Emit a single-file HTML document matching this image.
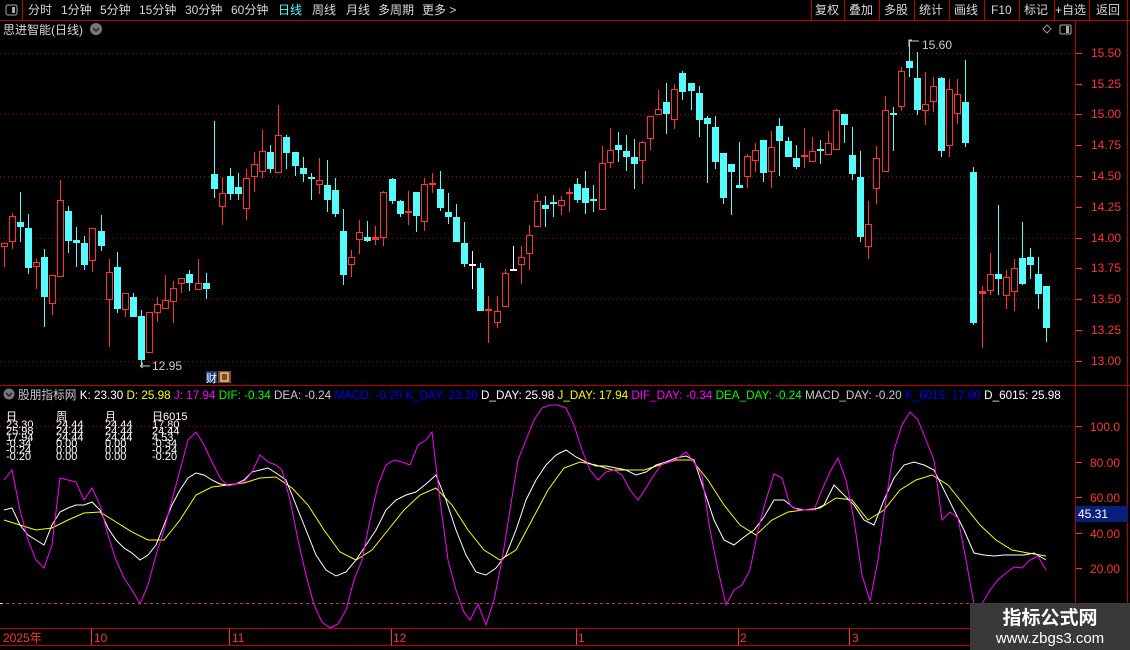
<!DOCTYPE html>
<html><head><meta charset="utf-8"><style>
html,body{margin:0;padding:0;background:#000;width:1130px;height:650px;overflow:hidden}
svg{display:block}
text{font-family:"Liberation Sans","Noto Sans CJK SC",sans-serif}
</style></head><body>
<svg id="s" width="1130" height="650" xmlns="http://www.w3.org/2000/svg" font-size="12">
<rect width="1130" height="650" fill="#000"/>
<line x1="0" y1="20.5" x2="1130" y2="20.5" stroke="#c00000"/>
<line x1="22.5" y1="0" x2="22.5" y2="20" stroke="#c00000"/>
<rect x="6" y="5" width="11" height="10" rx="2" fill="none" stroke="#aaa"/><rect x="12" y="7" width="3" height="6" fill="#aaa"/>
<g fill="#d8d8d8" font-size="12">
<text x="28" y="14">分时</text><text x="61" y="14">1分钟</text><text x="100" y="14">5分钟</text><text x="139" y="14">15分钟</text><text x="185" y="14">30分钟</text><text x="231" y="14">60分钟</text>
<text x="278" y="14" fill="#54fcfc">日线</text><text x="312" y="14">周线</text><text x="346" y="14">月线</text><text x="378" y="14">多周期</text><text x="422" y="14">更多 &gt;</text>
<text x="815" y="14">复权</text><text x="849" y="14">叠加</text><text x="884" y="14">多股</text><text x="919" y="14">统计</text><text x="954" y="14">画线</text><text x="991" y="14">F10</text><text x="1024" y="14">标记</text><text x="1055" y="14">+自选</text><text x="1096" y="14">返回</text>
</g>
<g stroke="#c00000"><line x1="811.5" y1="0" x2="811.5" y2="20"/><line x1="844.5" y1="0" x2="844.5" y2="20"/><line x1="879.5" y1="0" x2="879.5" y2="20"/><line x1="914.5" y1="0" x2="914.5" y2="20"/><line x1="949.5" y1="0" x2="949.5" y2="20"/><line x1="984.5" y1="0" x2="984.5" y2="20"/><line x1="1019.5" y1="0" x2="1019.5" y2="20"/><line x1="1054.5" y1="0" x2="1054.5" y2="20"/><line x1="1089.5" y1="0" x2="1089.5" y2="20"/><line x1="1127.5" y1="0" x2="1127.5" y2="650"/></g>
<text x="3" y="34" fill="#d8d8d8" font-size="12">思进智能(日线)</text>
<circle cx="96" cy="29" r="6" fill="#777"/><path d="M93 28l3 3 3-3" stroke="#222" stroke-width="1.5" fill="none"/>
<path d="M1047 25l4 4-4 4-4-4z" fill="none" stroke="#999"/>
<rect x="1060" y="25" width="11" height="9" rx="1.5" fill="none" stroke="#aaa"/><rect x="1066" y="26" width="3" height="7" fill="#aaa"/>
<line x1="1075.5" y1="20" x2="1075.5" y2="650" stroke="#c00000"/>
<line x1="0" y1="385.5" x2="1130" y2="385.5" stroke="#c00000"/>
<line x1="0" y1="628.5" x2="1130" y2="628.5" stroke="#c00000"/>
<line x1="0" y1="645.5" x2="1130" y2="645.5" stroke="#c00000"/>
<g id="grid" stroke="#a00000" stroke-dasharray="1,3"></g>
<g id="ax" fill="#ff3232" font-size="12"></g>
<g id="cd"></g>
<g fill="#ccc" font-size="12"><text x="152" y="370">12.95</text><text x="922" y="49">15.60</text></g>
<path d="M142 362v4h8M140 366l3-2M140 366l3 2" stroke="#ccc" fill="none"/>
<path d="M909 47v-7h3M909 41h10" stroke="#ccc" fill="none"/>
<rect x="206" y="371" width="11" height="12" fill="#1a3a7a"/><rect x="218" y="371" width="13" height="12" fill="#8a4a10"/>
<text x="206" y="382" fill="#fff" font-size="11">财</text><rect x="221" y="373" width="7" height="8" fill="none" stroke="#fff"/>
<circle cx="9" cy="394" r="5.5" fill="#777"/><path d="M6 393l3 3 3-3" stroke="#222" stroke-width="1.5" fill="none"/>
<svg x="0" y="385" width="1075" height="20"><text x="18" y="14" font-size="11.7" fill="#ccc">股朋指标网 <tspan fill="#fff">K: 23.30</tspan> <tspan fill="#ffff00">D: 25.98</tspan> <tspan fill="#ff00ff">J: 17.94</tspan> <tspan fill="#00ff00">DIF: -0.34</tspan> <tspan fill="#ccc">DEA: -0.24</tspan> <tspan fill="#0000ff">MACD: -0.20 K_DAY: 23.30</tspan> <tspan fill="#fff">D_DAY: 25.98</tspan> <tspan fill="#ffff00">J_DAY: 17.94</tspan> <tspan fill="#ff00ff">DIF_DAY: -0.34</tspan> <tspan fill="#00ff00">DEA_DAY: -0.24</tspan> <tspan fill="#ccc">MACD_DAY: -0.20</tspan> <tspan fill="#0000ff">K_6015: 17.80</tspan> <tspan fill="#fff">D_6015: 25.98</tspan></text></svg>
<g fill="#fff" font-size="11">
<text x="6" y="420">日</text><text x="56" y="420">周</text><text x="105" y="420">月</text><text x="152" y="420">日6015</text>
<g id="tbl"></g>
</g>
<line x1="0" y1="426.5" x2="1075" y2="426.5" stroke="#a00000" stroke-dasharray="1,3"/>
<g id="ind"></g>
<line x1="0" y1="603.5" x2="1075" y2="603.5" stroke="#ddd" stroke-dasharray="3,3"/>
<line x1="3" y1="603.5" x2="1075" y2="603.5" stroke="#c04040" stroke-dasharray="3,3" stroke-dashoffset="3"/>
<g fill="#ff3232" font-size="12"><text x="1090" y="431">100.0</text><text x="1090" y="467">80.00</text><text x="1090" y="502">60.00</text><text x="1090" y="538">40.00</text><text x="1090" y="573">20.00</text></g>
<g stroke="#ff3232"><line x1="1076" y1="426.5" x2="1082" y2="426.5"/><line x1="1076" y1="462.5" x2="1082" y2="462.5"/><line x1="1076" y1="497.5" x2="1082" y2="497.5"/><line x1="1076" y1="533.5" x2="1082" y2="533.5"/><line x1="1076" y1="568.5" x2="1082" y2="568.5"/></g>
<rect x="1076" y="506" width="52" height="16" fill="#0a1f7a"/><text x="1078" y="518" fill="#fff" font-size="12">45.31</text>
<g fill="#ff3232" font-size="12"><text x="3" y="642">2025年</text><text x="94" y="642">10</text><text x="232" y="642">11</text><text x="393" y="642">12</text><text x="578" y="642">1</text><text x="740" y="642">2</text><text x="852" y="642">3</text></g>
<g stroke="#ff3232"><line x1="91.5" y1="629" x2="91.5" y2="645"/><line x1="229.5" y1="629" x2="229.5" y2="645"/><line x1="391.5" y1="629" x2="391.5" y2="645"/><line x1="576.5" y1="629" x2="576.5" y2="645"/><line x1="738.5" y1="629" x2="738.5" y2="645"/><line x1="849.5" y1="629" x2="849.5" y2="645"/></g>
<rect x="970" y="603" width="160" height="47" fill="#3a3838"/>
<text x="1050" y="624" fill="#fff" font-size="19" font-weight="bold" text-anchor="middle">指标公式网</text>
<text x="1050" y="643" fill="#fff" font-size="15" text-anchor="middle">www.zbgs3.com</text>
</svg>
<script>
var NS="http://www.w3.org/2000/svg";
function el(p,t,a){var e=document.createElementNS(NS,t);for(var k in a)e.setAttribute(k,a[k]);p.appendChild(e);return e;}
var g=document.getElementById('grid');
[52.7,114.3,175.9,237.5,299.1,360.7].forEach(function(y){el(g,'line',{x1:0,x2:1075,y1:Math.round(y)+.5,y2:Math.round(y)+.5});});
var ax=document.getElementById('ax');
var labs=["15.50","15.25","15.00","14.75","14.50","14.25","14.00","13.75","13.50","13.25","13.00"];
labs.forEach(function(l,i){var y=52.7+i*30.8;var t=el(ax,'text',{x:1091,y:Math.round(y+4)});t.textContent=l;el(ax,'line',{x1:1076,x2:1082,y1:Math.round(y)+.5,y2:Math.round(y)+.5,stroke:'#ff3232'});});
var D="r4,243,247,243,267 r12,216,242,213,249 c20,222,227,192,242 c28,228,268,214,274 r36,262,267,259,289 c44,257,297,249,327 r52,275,304,275,315 r60,200,277,180,277 c68,211,241,206,253 c76,240,243,227,267 c84,243,265,236,270 r92,228,261,228,272 c101,231,246,215,251 r109,272,300,259,347 c117,267,309,252,313 r125,293,310,293,317 c133,297,317,293,317 c141,316,360,310,365 r149,312,353,312,353 r157,304,313,297,322 r165,300,309,275,309 r173,288,302,281,323 r181,278,284,278,293 c189,274,283,270,291 r198,283,290,259,290 c206,283,289,273,299 c214,174,189,121,198 r222,193,207,177,225 c230,176,194,168,200 c238,187,194,173,200 r246,178,209,169,220 r254,164,177,152,192 r262,151,172,130,178 c270,152,169,145,173 r278,135,173,105,173 c286,137,153,135,169 c295,152,166,152,176 c303,168,174,157,182 c311,177,179,173,200 r319,180,185,158,194 c327,185,200,160,212 c335,190,214,178,217 c343,231,275,209,285 r351,257,265,250,277 r359,232,240,220,254 c367,237,241,221,242 r375,237,240,226,245 r383,192,238,191,246 c392,179,201,178,204 c400,201,214,200,217 r408,211,213,191,225 c416,192,216,192,232 r424,184,222,178,231 r432,183,185,173,193 c440,189,208,171,211 c448,212,217,193,224 c456,217,242,204,242 c464,243,264,222,267 w472,264,266,251,289 c480,268,311,263,311 r488,309,311,296,343 r497,311,323,296,328 r505,273,307,269,307 w513,269,271,246,271 r521,257,265,246,284 r529,235,254,225,270 r537,201,227,194,227 c545,205,209,196,227 c553,202,204,195,217 r561,200,206,196,215 r569,192,194,188,212 c577,184,200,178,203 c585,188,203,171,214 c593,199,201,185,212 r602,163,210,146,210 r610,150,163,128,168 c618,145,150,132,162 c626,151,157,135,171 c634,157,164,139,189 r642,142,161,141,184 r650,116,139,116,150 r658,109,115,90,115 c666,102,114,83,134 r674,89,120,84,129 c682,73,92,71,100 c691,83,91,83,110 c699,93,120,86,137 c707,118,124,116,183 c715,127,162,116,169 c723,153,198,153,204 c731,164,172,164,215 c739,185,188,142,188 r747,156,177,154,188 r755,150,161,143,172 c763,140,173,140,182 r771,147,172,131,188 c779,126,141,118,176 c788,141,157,137,157 c796,158,167,145,169 r804,155,157,128,168 r812,151,162,137,162 c820,149,151,140,164 r828,143,155,131,155 r836,110,150,109,150 c844,114,125,114,143 c852,155,174,127,180 c860,177,237,151,242 r868,224,247,201,259 r876,158,189,146,204 r885,110,172,96,172 c893,113,115,107,151 r901,71,107,67,111 c909,61,68,40,77 c917,78,110,52,115 r925,104,111,72,125 r933,86,102,77,112 c941,78,151,77,157 r949,89,146,79,157 r957,94,114,79,124 c965,102,143,60,147 c973,172,323,167,325 r982,291,294,286,348 r990,274,291,253,295 c998,274,279,205,295 r1006,277,296,270,309 r1014,268,292,259,311 c1022,258,284,222,285 c1030,257,265,248,279 c1038,274,294,257,309 c1046,286,328,286,342";
var cd=document.getElementById('cd');
D.split(' ').forEach(function(s){var t=s[0];var v=s.slice(1).split(',').map(Number);var x=v[0],bt=v[1],bb=v[2],wt=v[3],wb=v[4];
var col=t=='r'?'#ff3232':(t=='c'?'#54fcfc':'#ffffff');
el(cd,'line',{x1:x+.5,x2:x+.5,y1:wt,y2:wb,stroke:col});
if(bb-bt<=3){el(cd,'rect',{x:x-3,y:bt,width:7,height:Math.max(2,bb-bt),fill:col});}
else if(t=='r'){el(cd,'rect',{x:x-2.5,y:bt+.5,width:6,height:bb-bt-1,fill:'#000',stroke:col});}
else el(cd,'rect',{x:x-3,y:bt,width:7,height:bb-bt,fill:col});});
var tb=document.getElementById('tbl');
var rows=[["23.30","24.44","24.44","17.80"],["25.98","24.44","24.44","24.44"],["17.94","24.44","24.44","4.53"],["-0.34","0.00","0.00","-0.34"],["-0.24","0.00","0.00","-0.24"],["-0.20","0.00","0.00","-0.20"]];
var xs=[6,56,105,152];
rows.forEach(function(r,i){r.forEach(function(c,j){var t=el(tb,'text',{x:xs[j],y:428+i*6.4});t.textContent=c;});});
var ind=document.getElementById('ind');
var J="4,480 12,470 20,510 28,540 36,560 44,568 52,545 60,478 68,480 76,482 84,500 92,488 100,505 108,535 116,560 124,578 132,590 140,604 148,585 156,555 164,530 172,500 180,470 188,440 196,432 204,445 212,462 220,478 228,486 236,484 244,482 252,472 260,455 268,462 276,465 282,470 290,500 298,540 306,575 314,605 322,622 330,628 338,624 346,610 354,580 362,560 370,520 378,485 386,465 394,460 402,462 410,465 418,445 426,440 432,432 440,500 448,560 456,590 464,612 470,620 478,604 486,625 494,600 502,560 510,510 518,460 526,440 534,420 542,408 550,405 558,405 566,408 574,425 582,450 590,470 598,480 606,472 614,470 622,475 630,490 638,500 646,488 654,475 662,464 670,462 678,458 686,452 694,462 702,476 710,530 718,570 726,605 734,590 742,585 750,570 758,530 766,500 774,474 782,478 790,505 798,510 806,510 814,510 822,490 830,472 838,458 846,480 854,520 862,575 870,601 878,560 886,500 894,450 902,425 910,412 918,420 926,440 934,460 942,520 950,512 958,518 966,560 974,604 982,604 990,590 998,580 1006,573 1014,567 1022,568 1030,560 1038,556 1046,570";
var K="4,510 12,508 20,525 28,535 36,540 44,545 52,525 60,512 68,508 76,505 84,505 92,502 100,510 108,528 116,540 124,548 132,553 140,560 148,555 156,545 164,525 172,505 180,490 188,478 196,473 204,475 212,480 220,484 228,485 236,484 244,480 252,472 260,470 268,468 276,473 286,480 296,505 306,530 316,555 326,570 336,576 346,572 356,560 366,545 376,530 386,510 396,500 406,495 416,492 426,484 436,475 446,500 456,530 466,555 476,572 486,575 496,568 506,555 516,530 526,500 536,480 546,465 556,455 566,450 576,457 586,462 596,466 606,466 616,468 626,470 636,475 646,472 656,465 666,462 676,458 686,456 694,460 704,490 714,520 724,540 734,545 744,537 754,530 764,517 774,500 784,500 794,508 804,510 814,510 824,505 834,485 844,495 854,505 864,520 874,525 884,500 894,478 904,465 914,462 924,465 934,470 944,490 954,510 964,530 974,553 984,555 994,556 1004,555 1014,555 1024,555 1034,553 1046,560";
var Dl="4,520 20,525 36,530 52,528 68,520 84,513 100,512 116,522 132,532 148,540 164,540 180,520 196,495 212,487 228,485 244,483 260,478 276,477 292,488 308,505 324,530 340,552 356,560 372,550 388,530 404,510 420,495 436,488 452,505 468,530 484,550 500,560 516,550 532,520 548,490 564,468 580,462 596,465 612,470 628,470 644,470 660,465 676,460 692,460 708,480 724,505 740,525 756,535 772,520 788,512 804,510 820,508 836,498 852,500 868,520 884,510 900,490 916,480 932,475 948,485 964,505 980,525 996,540 1012,550 1028,553 1046,556";
el(ind,'polyline',{points:Dl,fill:'none',stroke:'#ffff00','stroke-width':1});
el(ind,'polyline',{points:K,fill:'none',stroke:'#ffffff','stroke-width':1});
el(ind,'polyline',{points:J,fill:'none',stroke:'#ff00ff','stroke-width':1});
</script>
</body></html>
